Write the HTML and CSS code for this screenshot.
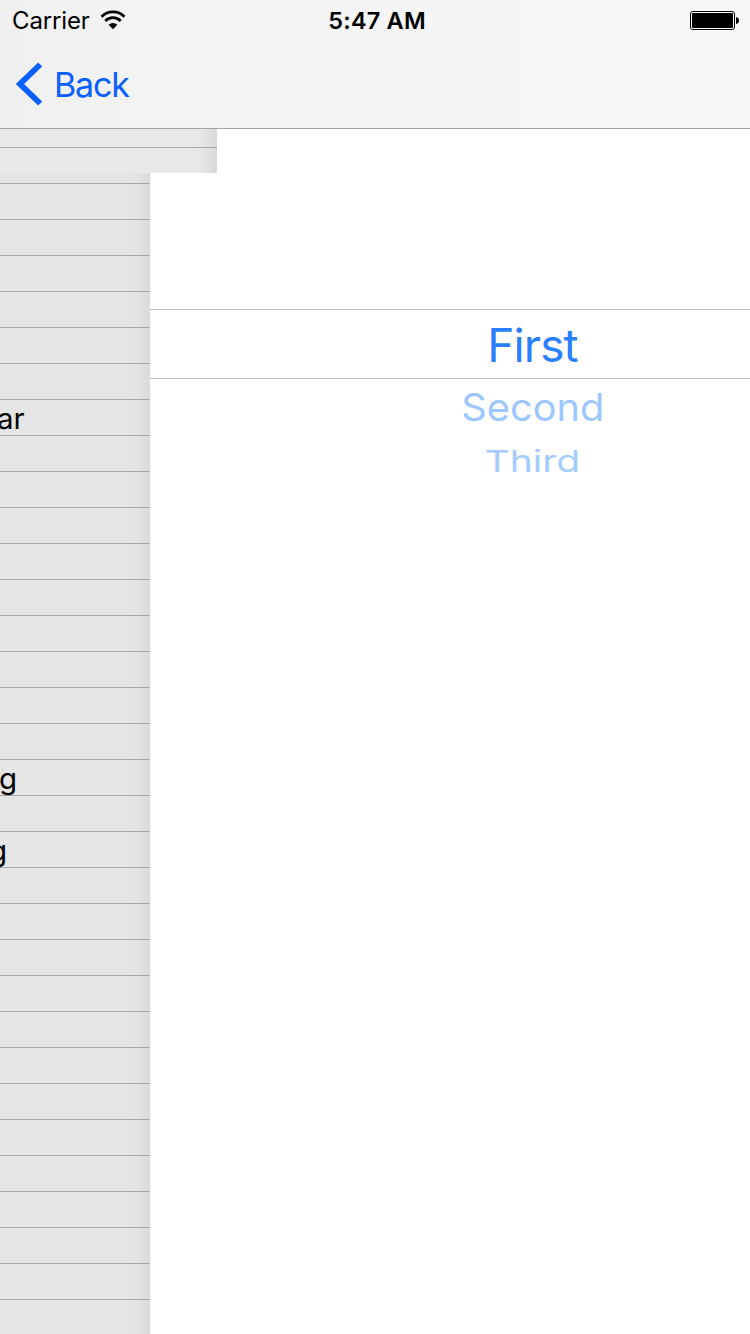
FILE: index.html
```html
<!DOCTYPE html>
<html lang="en">
<head>
<meta charset="utf-8">
<title>Picker</title>
<link rel="stylesheet" href="styles.css">
</head>
<body>
<div class="screen">
  <header class="topbar">
    <div class="status">
      <div class="status-left">
        <span class="carrier">Carrier</span>
        <svg class="wifi" width="26" height="20" viewBox="0 0 26 20">
          <g fill="none" stroke="#000" stroke-width="2.8">
            <path d="M1.500 6.700A16.200 16.200 0 0 1 24.500 6.700"/>
            <path d="M5.300 10.900A10.800 10.800 0 0 1 20.700 10.900"/>
          </g>
          <path d="M8.600 14.800A6.200 6.200 0 0 1 17.400 14.800L13 19.200Z"/>
        </svg>
      </div>
      <span class="time">5:47 AM</span>
      <svg class="battery" width="50" height="20" viewBox="0 0 50 20">
        <rect x=".5" y=".5" width="44" height="18" rx="2.5" fill="#fff" stroke="#000"/>
        <rect x="2" y="2" width="41" height="15" rx="1"/>
        <path d="M46 6q3 .5 3 3.500t-3 3.500z"/>
      </svg>
    </div>
    <nav class="nav">
      <svg class="chevron" width="27" height="44" viewBox="0 0 27 44"><path d="M24.200 2.500L4 22L24.200 41.500" fill="none" stroke="#0a60ff" stroke-width="5.800"/></svg>
      <span class="back">Back</span>
    </nav>
  </header>
  <div class="strip"></div>
  <main class="content">
    <aside class="list">
      <div class="row row-first"></div>
      <div class="row"></div><div class="row"></div><div class="row"></div><div class="row"></div><div class="row"></div><div class="row"></div>
      <div class="row"><span class="cell cell-ar">ar</span></div>
      <div class="row"></div><div class="row"></div><div class="row"></div><div class="row"></div><div class="row"></div><div class="row"></div><div class="row"></div><div class="row"></div><div class="row"></div>
      <div class="row"><span class="cell cell-g">g</span></div>
      <div class="row"></div>
      <div class="row"><span class="cell cell-edge">g</span></div>
      <div class="row"></div><div class="row"></div><div class="row"></div><div class="row"></div><div class="row"></div><div class="row"></div><div class="row"></div><div class="row"></div><div class="row"></div><div class="row"></div><div class="row"></div><div class="row"></div>
    </aside>
    <section class="picker">
      <div class="selected"><span class="first">First</span></div>
      <div class="option option-second"><span class="second">Second</span></div>
      <div class="option option-third"><span class="third">Third</span></div>
    </section>
  </main>
</div>
</body>
</html>
```
FILE: styles.css
```css
* { box-sizing: border-box; }
body { margin: 0; background: #fff; font-family: Inter, "Liberation Sans", sans-serif; }
svg { display: block; }
span { display: block; white-space: nowrap; }
.screen { width: 750px; height: 1334px; overflow: hidden; display: flex; flex-direction: column; }

.topbar { height: 129px; flex: none; background: linear-gradient(90deg, #f0f0f0, #f4f4f4 30%, #f7f7f7); border-bottom: 1px solid #a2a2a2; }
.status { height: 40px; display: grid; grid-template-columns: 1fr auto 1fr; align-items: center; padding: 0 10px 0 12px; }
.status-left { display: flex; align-items: center; gap: 10px; }
.carrier { font-size: 24px; line-height: 40px; letter-spacing: -.15px; padding-top: 1px; }
.wifi { margin-top: -1px; }
.time { font-size: 23.5px; line-height: 40px; font-weight: 600; letter-spacing: .2px; padding: 1px 0 0 2px; }
.battery { justify-self: end; margin-top: 1px; }
.nav { display: flex; align-items: center; height: 88px; padding-left: 16px; }
.chevron { margin-right: 11px; }
.back { color: #0a60ff; font-size: 34px; line-height: 44px; letter-spacing: -1.2px; padding-top: 1px; }

.strip { width: 217px; height: 44px; flex: none; background:
  linear-gradient(#a7a7a7, #a7a7a7) 0 18px / 100% 1px no-repeat,
  linear-gradient(90deg, #e8e8e8 198px, #e2e2e2 207px, #d9d9d9 217px); }
.content { flex: 1; display: flex; min-height: 0; }
.list { width: 150px; overflow: hidden; background: linear-gradient(90deg, #e5e5e5 130px, #e1e1e1 140px, #dadada 150px); }
.row { height: 36px; border-bottom: 1px solid #a7a7a7; }
.row-first { height: 11px; }
.cell { font-size: 29.5px; line-height: 35px; color: #000; padding-top: 1px; }
.cell-ar { margin-left: -3px; }
.cell-g { margin-left: -1px; }
.cell-edge { margin-left: -11px; }

.picker { flex: 1; padding-top: 136px; text-align: center; }
.selected, .option { display: flex; justify-content: center; align-items: center; padding-left: 165px; }
.selected { height: 70px; border: solid #c0c0c0; border-width: 1px 0; }
.first { font-size: 46px; line-height: 60px; color: #2a7fff; letter-spacing: -.9px; padding-top: 1px; }
.option-second { height: 56px; }
.second { font-size: 46px; color: #9cc8ff; transform: scale(.865, .84); }
.option-third { height: 52px; }
.third { font-size: 46px; color: #a4ccff; transform: scale(.85, .65); }
```
